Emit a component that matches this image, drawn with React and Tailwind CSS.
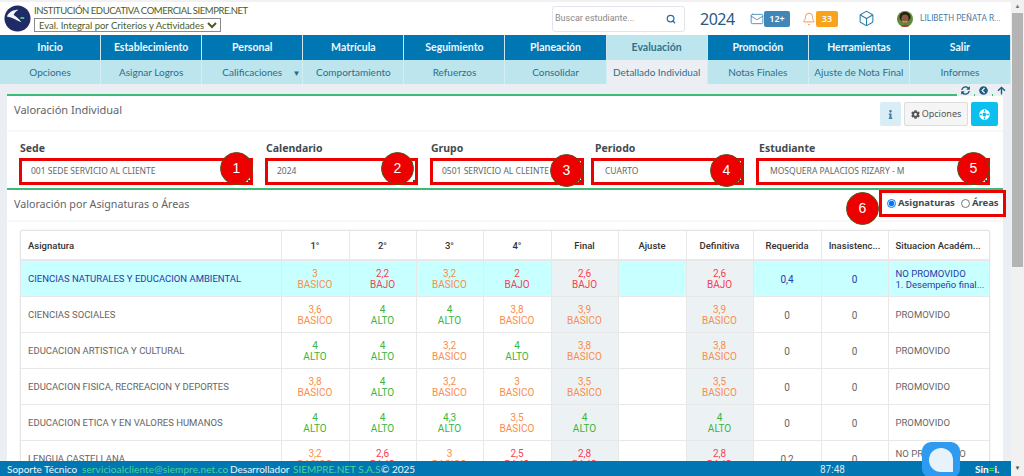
import { Mail, Bell, Box, Search } from "lucide-react";
import { FaCog, FaInfo, FaLifeRing, FaSyncAlt, FaChevronCircleLeft, FaArrowUp } from "react-icons/fa";

const menu = ["Inicio", "Establecimiento", "Personal", "Matrícula", "Seguimiento", "Planeación", "Evaluación", "Promoción", "Herramientas", "Salir"];
const subMenu = ["Opciones", "Asignar Logros", "Calificaciones", "Comportamiento", "Refuerzos", "Consolidar", "Detallado Individual", "Notas Finales", "Ajuste de Nota Final", "Informes"];

const fields = [
  { label: "Sede", value: "001 SEDE SERVICIO AL CLIENTE", n: 1, wrap: "", labelPad: "pl-[1px]", box: "w-[234px] pl-[9px]", badge: "right-[-3px] top-[-9px]" },
  { label: "Calendario", value: "2024", n: 2, wrap: "ml-[12px]", labelPad: "pl-[1px]", box: "w-[153px] pl-[9px]", badge: "right-[1px] top-[-9px]" },
  { label: "Grupo", value: "0501 SERVICIO AL CLEINTE", n: 3, wrap: "ml-[12px]", labelPad: "pl-[1px]", box: "w-[154px] pl-[9px]", badge: "right-[-2px] top-[-7px]" },
  { label: "Periodo", value: "CUARTO", n: 4, wrap: "ml-[7px]", labelPad: "pl-[4px]", box: "w-[153px] pl-[11px]", badge: "right-[-2px] top-[-7px]" },
  { label: "Estudiante", value: "MOSQUERA PALACIOS RIZARY - M", n: 5, wrap: "ml-[12px]", labelPad: "pl-[3px]", box: "w-[234px] pl-[11px]", badge: "right-[-3px] top-[-9px]" },
];

const tone = { BASICO: "text-[#fb8c4b]", BAJO: "text-[#f9404f]", ALTO: "text-[#3ab53a]" };

const rows = [
  { name: "CIENCIAS NATURALES Y EDUCACION AMBIENTAL", notes: [["3", "BASICO"], ["2,2", "BAJO"], ["3,2", "BASICO"], ["2", "BAJO"]], final: ["2,6", "BAJO"], req: "0,4", ina: "0", sit: ["NO PROMOVIDO", "1. Desempeño final..."], active: true },
  { name: "CIENCIAS SOCIALES", notes: [["3,6", "BASICO"], ["4", "ALTO"], ["4", "ALTO"], ["3,8", "BASICO"]], final: ["3,9", "BASICO"], req: "0", ina: "0", sit: ["PROMOVIDO"] },
  { name: "EDUCACION ARTISTICA Y CULTURAL", notes: [["4", "ALTO"], ["4", "ALTO"], ["3,2", "BASICO"], ["4", "ALTO"]], final: ["3,8", "BASICO"], req: "0", ina: "0", sit: ["PROMOVIDO"] },
  { name: "EDUCACION FISICA, RECREACION Y DEPORTES", notes: [["3,8", "BASICO"], ["4", "ALTO"], ["3,2", "BASICO"], ["3", "BASICO"]], final: ["3,5", "BASICO"], req: "0", ina: "0", sit: ["PROMOVIDO"] },
  { name: "EDUCACION ETICA Y EN VALORES HUMANOS", notes: [["4", "ALTO"], ["4", "ALTO"], ["4,3", "ALTO"], ["3,5", "BASICO"]], final: ["4", "ALTO"], req: "0", ina: "0", sit: ["PROMOVIDO"] },
  { name: "LENGUA CASTELLANA", notes: [["3,2", "BASICO"], ["2,6", "BAJO"], ["3", "BASICO"], ["2,5", "BAJO"]], final: ["2,8", "BAJO"], req: "0,2", ina: "0", sit: ["NO PROMOVIDO", "1. Desempeño final..."] },
];

function Badge({ n, className }) {
  return (
    <span className={`absolute flex h-[33px] w-[33px] items-center justify-center rounded-full border border-[#4d5a1e] bg-[#ee0000] font-['Liberation_Sans',sans-serif] text-[14px] font-normal text-white ${className}`}>
      {n}
    </span>
  );
}

function Note({ note }) {
  return (
    <div className={`text-[10px] leading-[11.5px] ${tone[note[1]]}`}>
      <div>{note[0]}</div>
      <div>{note[1]}</div>
    </div>
  );
}

function Logo() {
  return (
    <svg viewBox="0 0 28 28" className="h-[27px] w-[27px] shrink-0">
      <circle cx="14" cy="14" r="13.5" fill="#1f2a66" />
      <path d="M3 12c2-5 7-7 12-7-2 1-4 3-5 5 2 2 5 3 8 8-5-2-9-5-15-6z" fill="#f4f6fb" />
      <rect x="17" y="12.5" width="4" height="2" fill="#2fd06a" />
    </svg>
  );
}

function Avatar() {
  return (
    <svg viewBox="0 0 16 16" className="h-[16px] w-[16px] rounded-full">
      <rect width="16" height="16" fill="#5f8a3a" />
      <ellipse cx="8" cy="6" rx="5.5" ry="5" fill="#2a1c14" />
      <ellipse cx="8" cy="8" rx="3.6" ry="4.4" fill="#8a5a3c" />
      <path d="M5.5 10c1.5 1 3.5 1 5 0l-.6 1.2H6z" fill="#f1e6dc" />
      <path d="M3 16c1-3 9-3 10 0z" fill="#b23a2c" />
    </svg>
  );
}

export default function App() {
  return (
    <div className="relative flex h-[476px] w-[1024px] overflow-hidden bg-[#ebeff4] font-['Noto_Sans',sans-serif]">
      <div className="flex w-[1011px] flex-col">
        <header className="flex h-[35px] shrink-0 items-center border-t-2 border-[#f1f1f1] bg-white pl-[4px]">
          <Logo />
          <div className="ml-[3px] flex w-[212px] flex-col font-['Lato',sans-serif]">
            <span className="whitespace-nowrap text-[9.5px] leading-[12px] tracking-[-0.45px] text-[#4d5a1e]">INSTITUCIÓN EDUCATIVA COMERCIAL SIEMPRE.NET</span>
            <select className="mt-[1px] h-[14px] w-[187px] border border-[#8a8a8a] bg-white text-[9.5px] leading-[12px] text-[#4d5a1e]">
              <option>Eval. Integral por Criterios y Actividades</option>
            </select>
          </div>
          <div className="ml-[306px] flex h-[26px] w-[133px] items-center justify-between rounded-[3px] border border-[#e4e4ee] pl-[2px] pr-[8px] font-['Roboto',sans-serif] text-[9px] text-[#888]">
            Buscar estudiante...
            <Search size={10} strokeWidth={3} className="text-[#2a6f9e]" />
          </div>
          <span className="ml-[15px] w-[34px] text-[16px] leading-none tracking-[-0.5px] text-[#2a5a80]">2024</span>
          <Mail size={14} strokeWidth={1.5} className="ml-[16px] text-[#4186b8]" />
          <span className="flex h-[16px] w-[26px] items-center justify-center rounded-[2px] bg-[#4186b8] text-[9px] font-semibold text-white">12+</span>
          <Bell size={14} strokeWidth={1.5} className="ml-[12px] text-[#f58a3c]" />
          <span className="flex h-[16px] w-[22px] items-center justify-center rounded-[2px] bg-[#f9a31a] text-[9px] font-semibold text-white">33</span>
          <Box size={17} strokeWidth={1.5} className="ml-[20px] text-[#2a7fa8]" />
          <span className="ml-[22px]"><Avatar /></span>
          <span className="ml-[7px] whitespace-nowrap font-['Roboto',sans-serif] text-[8.25px] text-[#4a7ba8]">LILIBETH PEÑATA R...</span>
        </header>

        <nav className="grid h-[25px] shrink-0 grid-cols-10 bg-[#0077b3] font-['Lato',sans-serif]">
          {menu.map((m) => (
            <div key={m} className={`flex items-center justify-center border-r border-[#cfe6f0] pt-[1px] text-[10.5px] font-bold ${m === "Evaluación" ? "bg-[#bce5ee] text-[#35708a]" : "text-[#eef8fc]"}`}>
              {m}
            </div>
          ))}
        </nav>
        <nav className="grid h-[24px] shrink-0 grid-cols-10 bg-[#bce5ee] font-['Lato',sans-serif]">
          {subMenu.map((m) => (
            <div key={m} className={`relative flex items-center justify-center border-r border-[#d5eef4] pt-[1px] text-[10px] text-[#2d6e8a] ${m === "Detallado Individual" ? "bg-[#ebeff4]" : ""}`}>
              {m}
              {m === "Calificaciones" && <span className="absolute right-[2px] text-[8px] text-[#1f6b96]">▼</span>}
            </div>
          ))}
        </nav>

        <main className="relative min-h-0 flex-1 overflow-hidden px-[7px] pt-[10px]">
          <div className="absolute right-[1px] top-0 flex h-[12px] items-center gap-[1px] text-[#1f5c80]">
            <span className="flex h-[12px] w-[17px] items-center justify-center bg-[#ebeff4]"><FaSyncAlt size={9} /></span>
            <span className="flex h-[12px] w-[17px] items-center justify-center bg-[#ebeff4]"><FaChevronCircleLeft size={9} /></span>
            <span className="flex h-[12px] w-[17px] items-center justify-center bg-[#ebeff4]"><FaArrowUp size={9} /></span>
          </div>
          <section className="w-[996px] border-t-2 border-[#3dbb78] bg-white pb-[40px]">
            <div className="flex h-[36px] items-start justify-between border-b-2 border-[#f8f8f8] pl-[7px] pr-[5px] pt-[6px]">
              <h2 className="mt-[1px] text-[11px] leading-[14px] text-[#5f6468]">Valoración Individual</h2>
              <div className="flex gap-[3px]">
                <span className="flex h-[24px] w-[21px] items-center justify-center rounded-[2px] bg-[#d9edf7] text-[#3f7fa6]"><FaInfo size={9} /></span>
                <span className="flex h-[24px] w-[64px] items-center justify-center gap-[2px] rounded-[2px] border border-[#ddd] bg-[#f5f5f5] text-[9px] text-[#555]"><FaCog size={9} />Opciones</span>
                <span className="flex h-[24px] w-[27px] items-center justify-center rounded-[2px] bg-[#0bc0ee] text-white"><FaLifeRing size={11} className="rotate-45" /></span>
              </div>
            </div>

            <div className="flex h-[58px] items-start border-b-2 border-[#3dbb78] pl-[12px] pt-[9px]">
              {fields.map((f) => (
                <div key={f.label} className={f.wrap}>
                  <div className={`text-[10.5px] font-bold leading-[14px] text-[#454a4e] ${f.labelPad}`}>{f.label}</div>
                  <div className={`relative mt-[3px] flex h-[27px] items-center border-[3px] border-[#ee0000] bg-white text-[8.5px] text-[#666] ${f.box}`}>
                    <span className="whitespace-nowrap">{f.value}</span>
                    <span className="absolute bottom-0 right-0 h-[2px] w-[2px] bg-[#444]"></span>
                    <Badge n={f.n} className={f.badge} />
                  </div>
                </div>
              ))}
            </div>

            <div className="relative flex h-[32px] items-start justify-between border-b-2 border-[#f8f8f8] pl-[7px]">
              <h2 className="mt-[7px] text-[10.7px] leading-[14px] text-[#5f6468]">Valoración por Asignaturas o Áreas</h2>
              <div className="relative mr-[-3px] flex h-[27px] w-[127px] items-center gap-[2px] border-[3px] border-[#ee0000] bg-white pl-[5px] text-[9.5px] font-bold text-[#454a4e]">
                <input type="radio" name="tipo" defaultChecked className="h-[9px] w-[9px]" />
                <span className="whitespace-nowrap">Asignaturas</span>
                <input type="radio" name="tipo" className="ml-[4px] h-[9px] w-[9px]" />
                <span>Áreas</span>
                <Badge n={6} className="left-[-36px] top-[-1px]" />
              </div>
            </div>

            <div className="ml-[13px] mt-[8px] w-[970px] rounded-[2px] border border-[#e4e4e4] shadow-[0_0_2px_rgba(0,0,0,0.08)]">
              <table className="w-full table-fixed border-collapse font-['Roboto',sans-serif] text-[10px] text-[#666]">
                <colgroup>
                  <col className="w-[260px]" />
                  <col className="w-[68px]" />
                  <col className="w-[67px]" />
                  <col className="w-[67px]" />
                  <col className="w-[68px]" />
                  <col className="w-[67px]" />
                  <col className="w-[68px]" />
                  <col className="w-[67px]" />
                  <col className="w-[68px]" />
                  <col className="w-[67px]" />
                  <col />
                </colgroup>
                <thead>
                  <tr className="h-[29px] border-b-2 border-[#e8e8e8] text-[9.5px] text-[#333]">
                    <th className="pl-[7px] pt-[2px] text-left font-medium">Asignatura</th>
                    {["1°", "2°", "3°", "4°", "Final", "Ajuste", "Definitiva", "Requerida", "Inasistenc...", "Situacion Académ..."].map((h, i) => (
                      <th key={h} className={`whitespace-nowrap border-l border-[#e8e8e8] pt-[2px] font-medium ${i === 9 ? "pl-[7px] text-left" : "text-center"}`}>{h}</th>
                    ))}
                  </tr>
                </thead>
                <tbody>
                  {rows.map((r) => (
                    <tr key={r.name} className={`h-[36px] border-b border-[#e8e8e8] [&>td]:pt-[2px] ${r.active ? "bg-[#c8ffff] text-[#2a3aa8]" : ""}`}>
                      <td className="whitespace-nowrap pl-[7px] text-[9.5px]">{r.name}</td>
                      {r.notes.map((n, i) => (
                        <td key={i} className="border-l border-[#e8e8e8] text-center"><Note note={n} /></td>
                      ))}
                      <td className="border-l border-[#e8e8e8] bg-[#ecf2f4] text-center"><Note note={r.final} /></td>
                      <td className="border-l border-[#e8e8e8]"></td>
                      <td className="border-l border-[#e8e8e8] bg-[#ecf2f4] text-center"><Note note={r.final} /></td>
                      <td className="border-l border-[#e8e8e8] text-center">{r.req}</td>
                      <td className="border-l border-[#e8e8e8] text-center">{r.ina}</td>
                      <td className="whitespace-nowrap border-l border-[#e8e8e8] pl-[7px] text-[9.5px] leading-[11.5px]">
                        {r.sit.map((s) => <div key={s}>{s}</div>)}
                      </td>
                    </tr>
                  ))}
                </tbody>
              </table>
            </div>
          </section>
        </main>

        <footer className="flex h-[15px] shrink-0 items-center whitespace-nowrap bg-[#0077b3] pl-[7px] pt-[1px] font-['Lato',sans-serif] text-[10px] text-[#eef8fc]">
          <span className="w-[75px]">Soporte Técnico</span>
          <span className="w-[148px] tracking-[0.12px] text-[#45d69a]">servicioalcliente@siempre.net.co</span>
          <span className="w-[63px]">Desarrollador</span>
          <span className="w-[88px] text-[#45d69a]">SIEMPRE.NET S.A.S</span>
          <span className="w-[439px]">© 2025</span>
          <span className="w-[155px] font-['Roboto',sans-serif] text-[10px] text-[#d8ecf4]">87:48</span>
          <span className="flex items-center text-[10px] font-bold text-white">Sin<span className="text-[#39e05a]">=</span>i.</span>
        </footer>
      </div>

      <div className="flex w-[13px] flex-col items-center bg-[#f1f1f1]">
        <span className="flex h-[13px] items-center text-[6px] text-[#777]">▲</span>
        <div className="h-[254px] w-[11px] bg-[#b4b4b4]"></div>
        <span className="mt-auto flex h-[15px] items-center text-[6px] text-[#555]">▼</span>
      </div>

      <div className="absolute left-[922px] top-[442px] flex h-[36px] w-[38px] items-center justify-center rounded-[9px] bg-[#2f9bf0]">
        <span className="h-[24px] w-[24px] rounded-full rounded-br-[2px] bg-[#e8f2fa]"></span>
      </div>
    </div>
  );
}
